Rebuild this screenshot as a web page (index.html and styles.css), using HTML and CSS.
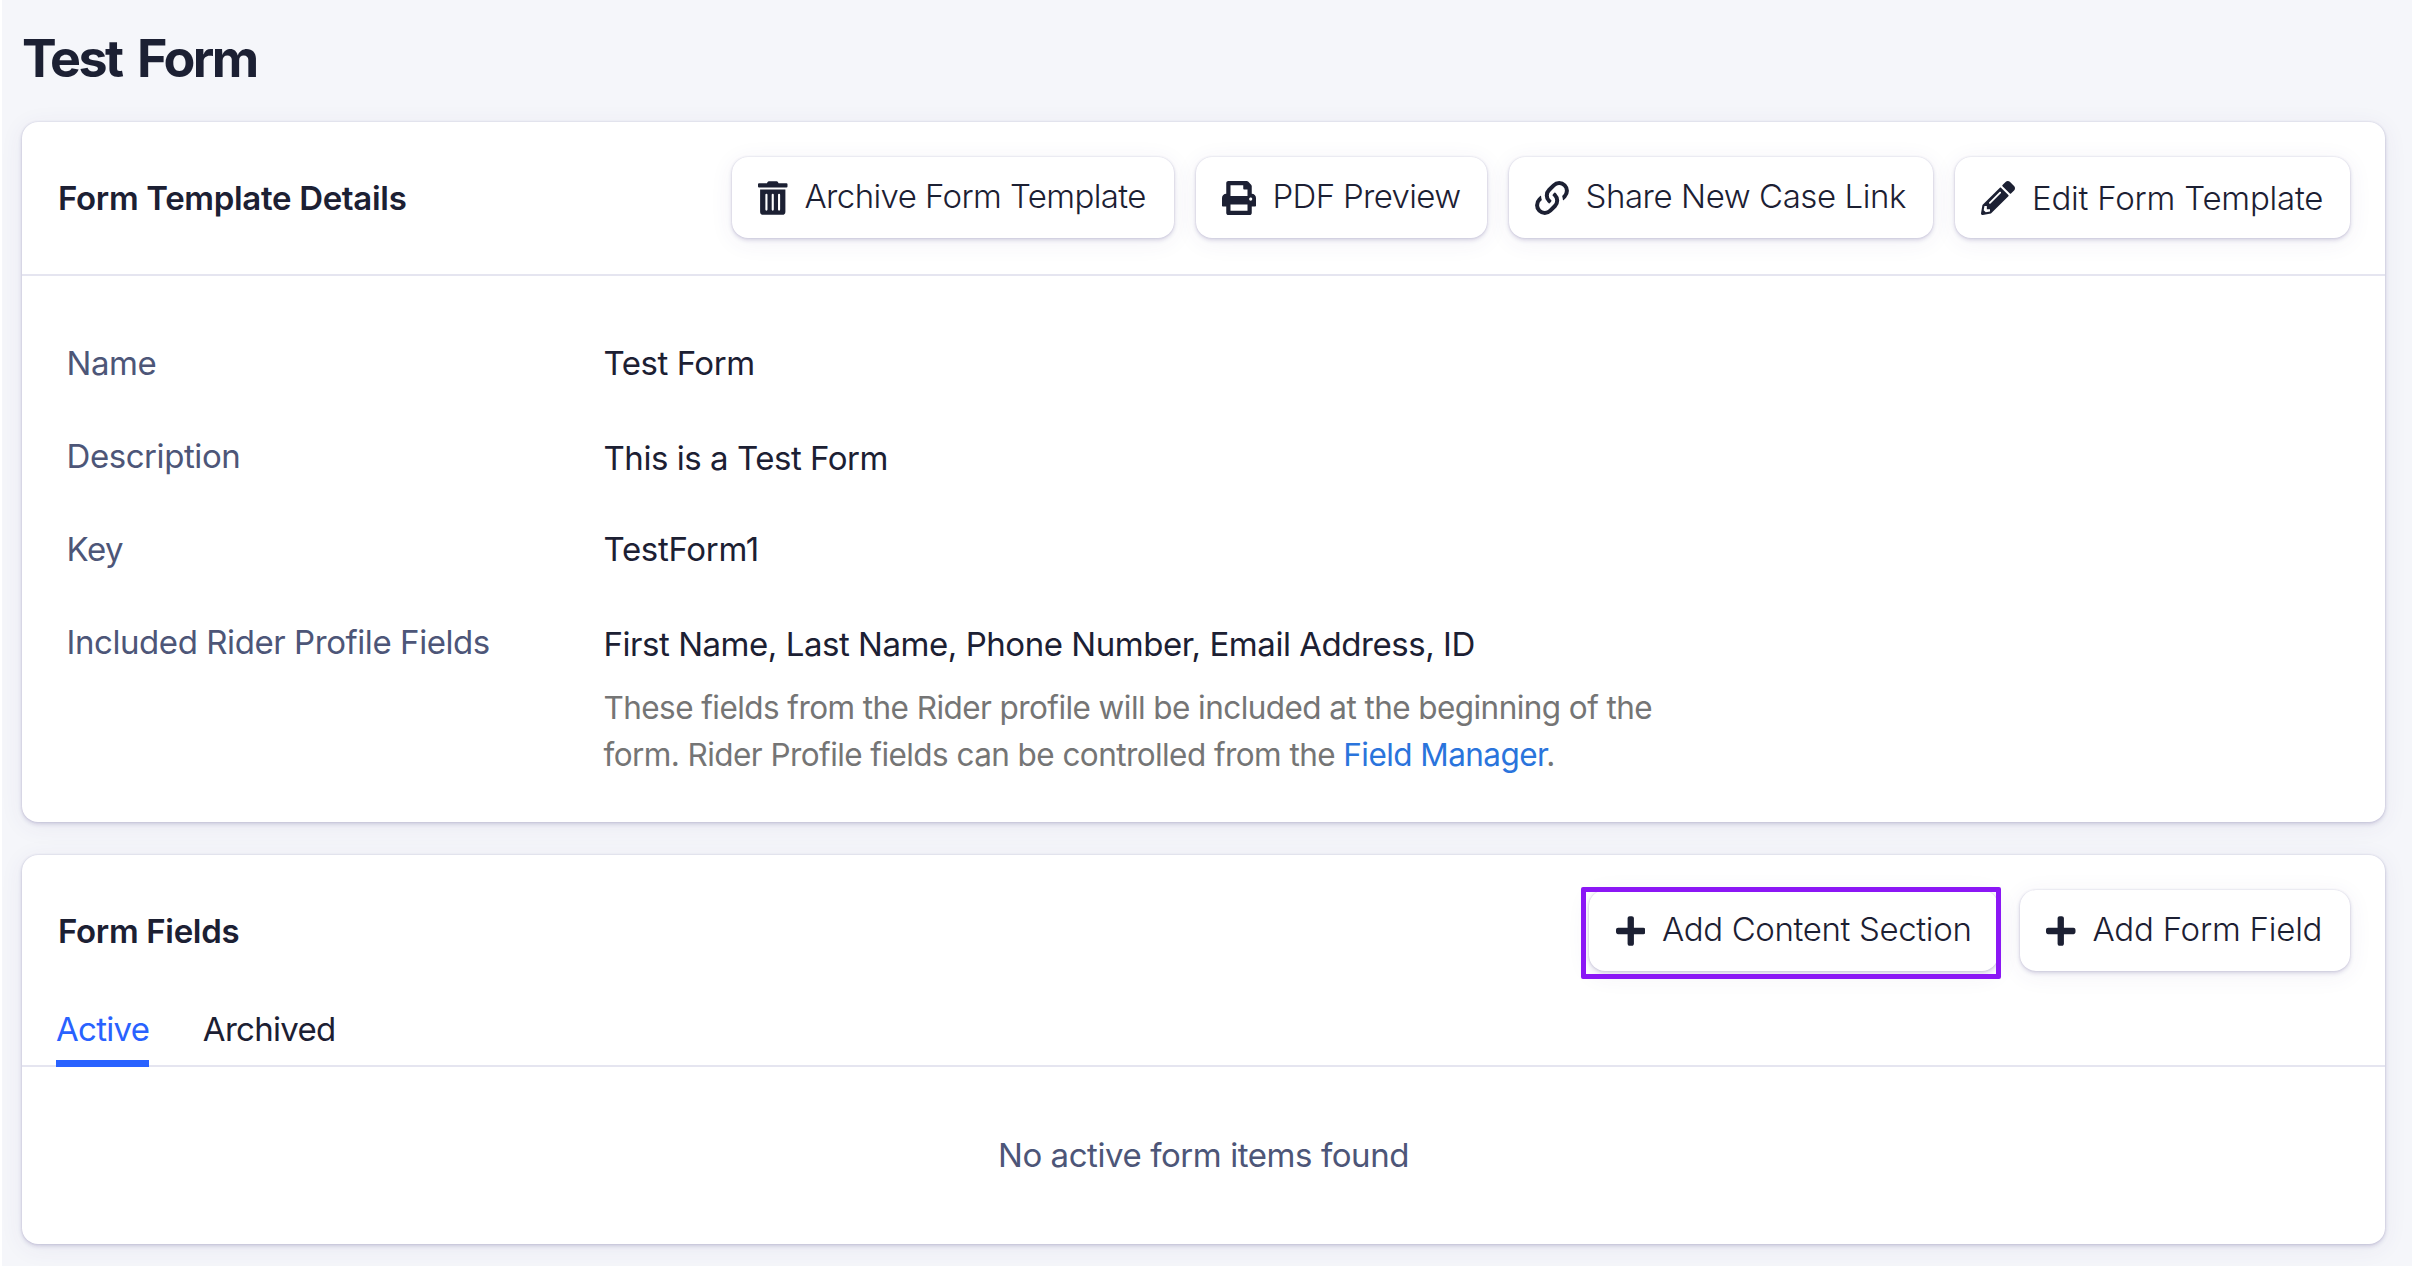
FILE: index.html
```html
<!DOCTYPE html>
<html lang="en">
<head>
<meta charset="utf-8">
<title>Test Form</title>
<link rel="stylesheet" href="styles.css">
</head>
<body>
<main class="page">
  <h1 class="page-title">Test Form</h1>

  <section class="card card-details">
    <header class="card-header">
      <h2 class="card-title">Form Template Details</h2>
      <div class="actions">
        <button class="btn btn-archive" type="button">
          <svg class="icon icon-narrow" viewBox="0 0 448 512"><path d="M32 464a48 48 0 0 0 48 48h288a48 48 0 0 0 48-48V128H32zm272-256a16 16 0 0 1 32 0v224a16 16 0 0 1-32 0zm-96 0a16 16 0 0 1 32 0v224a16 16 0 0 1-32 0zm-96 0a16 16 0 0 1 32 0v224a16 16 0 0 1-32 0zM432 32H312l-9.400-18.700A24 24 0 0 0 281.100 0H166.800a23.720 23.720 0 0 0-21.400 13.300L136 32H16A16 16 0 0 0 0 48v32a16 16 0 0 0 16 16h416a16 16 0 0 0 16-16V48a16 16 0 0 0-16-16z"/></svg>
          <span class="btn-label">Archive Form Template</span>
        </button>
        <button class="btn btn-pdf" type="button">
          <svg class="icon" viewBox="0 0 512 512"><path d="M448 192V77.250c0-8.490-3.370-16.620-9.370-22.630L393.370 9.370c-6-6-14.140-9.370-22.630-9.370H96C78.330 0 64 14.330 64 32v160c-35.350 0-64 28.650-64 64v112c0 8.840 7.160 16 16 16h48v96c0 17.670 14.330 32 32 32h320c17.670 0 32-14.330 32-32v-96h48c8.840 0 16-7.160 16-16V256c0-35.350-28.650-64-64-64zm-64 256H128v-96h256v96zm0-224H128V64h192v48c0 8.840 7.160 16 16 16h48v96zm48 72c-13.250 0-24-10.750-24-24 0-13.260 10.750-24 24-24s24 10.740 24 24c0 13.250-10.750 24-24 24z"/></svg>
          <span class="btn-label">PDF Preview</span>
        </button>
        <button class="btn btn-share" type="button">
          <svg class="icon icon-link" viewBox="10 10 492 492"><path d="M326.612 185.391c59.747 59.809 58.927 155.698.36 214.590-.11.12-.24.25-.36.37l-67.200 67.200c-59.270 59.270-155.699 59.262-214.960 0-59.270-59.260-59.270-155.700 0-214.960l37.106-37.106c9.840-9.840 26.786-3.300 27.294 10.606.648 17.722 3.826 35.527 9.690 52.721 1.986 5.822.567 12.262-3.783 16.612l-13.087 13.087c-28.026 28.026-28.905 73.660-1.155 101.960 28.024 28.579 74.086 28.749 102.325.51l67.200-67.190c28.191-28.191 28.073-73.757 0-101.830-3.701-3.694-7.429-6.564-10.341-8.569a16.037 16.037 0 0 1-6.947-12.606c-.396-10.567 3.348-21.456 11.698-29.806l21.054-21.055c5.521-5.521 14.182-6.199 20.584-1.731a152.482 152.482 0 0 1 20.522 17.197zM467.547 44.449c-59.261-59.262-155.690-59.270-214.960 0l-67.200 67.200c-.12.12-.25.25-.36.37-58.566 58.892-59.387 154.781.36 214.590a152.454 152.454 0 0 0 20.521 17.196c6.402 4.468 15.064 3.789 20.584-1.731l21.054-21.055c8.350-8.350 12.094-19.239 11.698-29.806a16.037 16.037 0 0 0-6.947-12.606c-2.912-2.005-6.640-4.875-10.341-8.569-28.073-28.073-28.191-73.639 0-101.830l67.200-67.190c28.239-28.239 74.300-28.069 102.325.51 27.750 28.300 26.872 73.934-1.155 101.960l-13.087 13.087c-4.350 4.350-5.769 10.790-3.783 16.612 5.864 17.194 9.042 34.999 9.690 52.721.509 13.906 17.454 20.446 27.294 10.606l37.106-37.106c59.271-59.259 59.271-155.699.001-214.959z"/></svg>
          <span class="btn-label">Share New Case Link</span>
        </button>
        <button class="btn btn-edit" type="button">
          <svg class="icon" viewBox="0 0 512 512"><path d="M497.900 142.100l-46.100 46.100c-4.700 4.700-12.300 4.700-17 0l-111-111c-4.700-4.700-4.700-12.300 0-17l46.100-46.100c18.700-18.700 49.100-18.700 67.900 0l60.100 60.100c18.800 18.700 18.800 49.100 0 67.900zM284.200 99.800L21.600 362.400.4 483.900c-2.900 16.400 11.400 30.600 27.800 27.800l121.500-21.300 262.600-262.600c4.700-4.700 4.700-12.300 0-17l-111-111c-4.800-4.700-12.400-4.700-17.100 0zM124.100 339.900c-5.500-5.500-5.500-14.300 0-19.800l154-154c5.500-5.500 14.300-5.500 19.800 0s5.500 14.300 0 19.800l-154 154c-5.500 5.500-14.300 5.500-19.800 0zM88 424h48v36.300l-64.500 11.300-31.100-31.100L51.700 376H88v48z"/></svg>
          <span class="btn-label">Edit Form Template</span>
        </button>
      </div>
    </header>

    <dl class="details">
      <dt>Name</dt>
      <dd>Test Form</dd>
      <dt>Description</dt>
      <dd class="lowered">This is a Test Form</dd>
      <dt>Key</dt>
      <dd class="key-value">TestForm1</dd>
      <dt class="included">Included Rider Profile Fields</dt>
      <dd class="lowered">First Name, Last Name, Phone Number, Email Address, ID
        <p class="help">These fields from the Rider profile will be included at the beginning of the<br>form. Rider Profile fields can be controlled from the <a class="link">Field Manager</a>.</p>
      </dd>
    </dl>
  </section>

  <section class="card card-fields">
    <header class="card-header">
      <h2 class="card-title">Form Fields</h2>
      <div class="actions">
        <button class="btn btn-section" type="button">
          <svg class="icon icon-narrow" viewBox="0 0 448 512"><path d="M416 208H272V64c0-17.670-14.330-32-32-32h-32c-17.670 0-32 14.330-32 32v144H32c-17.670 0-32 14.330-32 32v32c0 17.670 14.330 32 32 32h144v144c0 17.670 14.330 32 32 32h32c17.670 0 32-14.330 32-32V304h144c17.670 0 32-14.330 32-32v-32c0-17.670-14.330-32-32-32z"/></svg>
          <span class="btn-label">Add Content Section</span>
          <span class="highlight"></span>
        </button>
        <button class="btn btn-field" type="button">
          <svg class="icon icon-narrow" viewBox="0 0 448 512"><path d="M416 208H272V64c0-17.670-14.330-32-32-32h-32c-17.670 0-32 14.330-32 32v144H32c-17.670 0-32 14.330-32 32v32c0 17.670 14.330 32 32 32h144v144c0 17.670 14.330 32 32 32h32c17.670 0 32-14.330 32-32V304h144c17.670 0 32-14.330 32-32v-32c0-17.670-14.330-32-32-32z"/></svg>
          <span class="btn-label">Add Form Field</span>
        </button>
      </div>
    </header>
    <nav class="tabs">
      <a class="tab tab-active">Active</a>
      <a class="tab tab-archived">Archived</a>
    </nav>
    <p class="empty">No active form items found</p>
  </section>
</main>
</body>
</html>
```
FILE: styles.css
```css
* { box-sizing: border-box; margin: 0; padding: 0; }

body {
  background: #f5f6fa;
  color: #1c2033;
  font: 400 33px/46px Inter, "Liberation Sans", sans-serif;
  letter-spacing: -0.46px;
  white-space: nowrap;
  overflow: hidden;
}

.page {
  height: 1266px;
  padding: 0 27px 0 20px;
  border-left: 2px solid #fff;
}

.page-title {
  height: 122px;
  font-size: 52px;
  font-weight: 700;
  line-height: 118px;
  letter-spacing: -2.6px;
  word-spacing: 6px;
}

.card {
  background: #fff;
  border-radius: 16px;
  box-shadow: 0 0 2px rgba(72, 60, 130, .2), 0 2px 4px rgba(72, 60, 130, .2), 0 4px 24px rgba(72, 60, 130, .07);
}

.card-details { height: 700px; }
.card-fields { height: 389px; margin-top: 33px; }

.card-header {
  display: flex;
  align-items: center;
  justify-content: space-between;
  padding: 35px 35px 0 36px;
}

.card-details .card-header { height: 154px; padding-bottom: 36px; border-bottom: 2px solid #e5e5f0; }

.card-title { font-size: 33px; font-weight: 600; letter-spacing: -.32px; }

.actions { display: flex; gap: 22px; }

.btn {
  position: relative;
  display: flex;
  align-items: center;
  gap: 17px;
  height: 81px;
  padding: 0 0 0 26px;
  border: 0;
  border-radius: 16px;
  background: #fff;
  color: inherit;
  font: 300 33px/46px Inter, "Liberation Sans", sans-serif;
  box-shadow: 0 0 2px rgba(72, 60, 130, .2), 0 2px 4px rgba(72, 60, 130, .2), 0 4px 24px rgba(72, 60, 130, .07);
}

.btn-label { margin-top: -3px; }
.btn-archive { width: 442px; letter-spacing: -.6px; }
.btn-pdf { width: 291px; letter-spacing: -.66px; gap: 16.500px; }
.btn-share { width: 424px; letter-spacing: -.435px; gap: 16.500px; }
.btn-edit { width: 395px; letter-spacing: -.21px; gap: 17px; }
.btn-edit .btn-label { margin-top: 0; }
.btn-section { width: 409.500px; letter-spacing: -.36px; padding-left: 27px; }
.btn-field { width: 330px; letter-spacing: -.22px; }

.icon { flex: none; width: 34px; height: 34px; fill: #1c2033; }
.icon-narrow { width: 29.500px; }
.icon-link { overflow: visible; stroke: #fff; stroke-width: 22; }

.highlight {
  position: absolute;
  inset: -3px -3px -8px -8px;
  border: 5px solid #8b17f5;
  border-radius: 2px;
}

.details {
  display: grid;
  grid-template-columns: 537px 1fr;
  row-gap: 47px;
  padding: 64px 44px 0 44.500px;
}

.details dt { color: #4d5678; letter-spacing: -.43px; }
.details .lowered { margin-bottom: -2px; padding-top: 2px; }
.details .key-value { letter-spacing: -.3px; }

.help {
  margin-top: 17px;
  color: #757575;
  font-size: 31.500px;
  line-height: 47px;
  letter-spacing: -.57px;
}

.link { color: #2a74dc; }

.tabs {
  display: flex;
  gap: 53.500px;
  height: 96px;
  padding: 0 34px;
  border-bottom: 2px solid #e5e5f0;
}

.tab { height: 96px; padding-top: 35px; letter-spacing: -.7px; }
.tab-active { border-bottom: 7px solid #2962ff; color: #2962ff; letter-spacing: -.7px; }

.empty {
  padding-top: 65px;
  color: #4d5678;
  letter-spacing: -.43px;
  text-align: center;
}
```
